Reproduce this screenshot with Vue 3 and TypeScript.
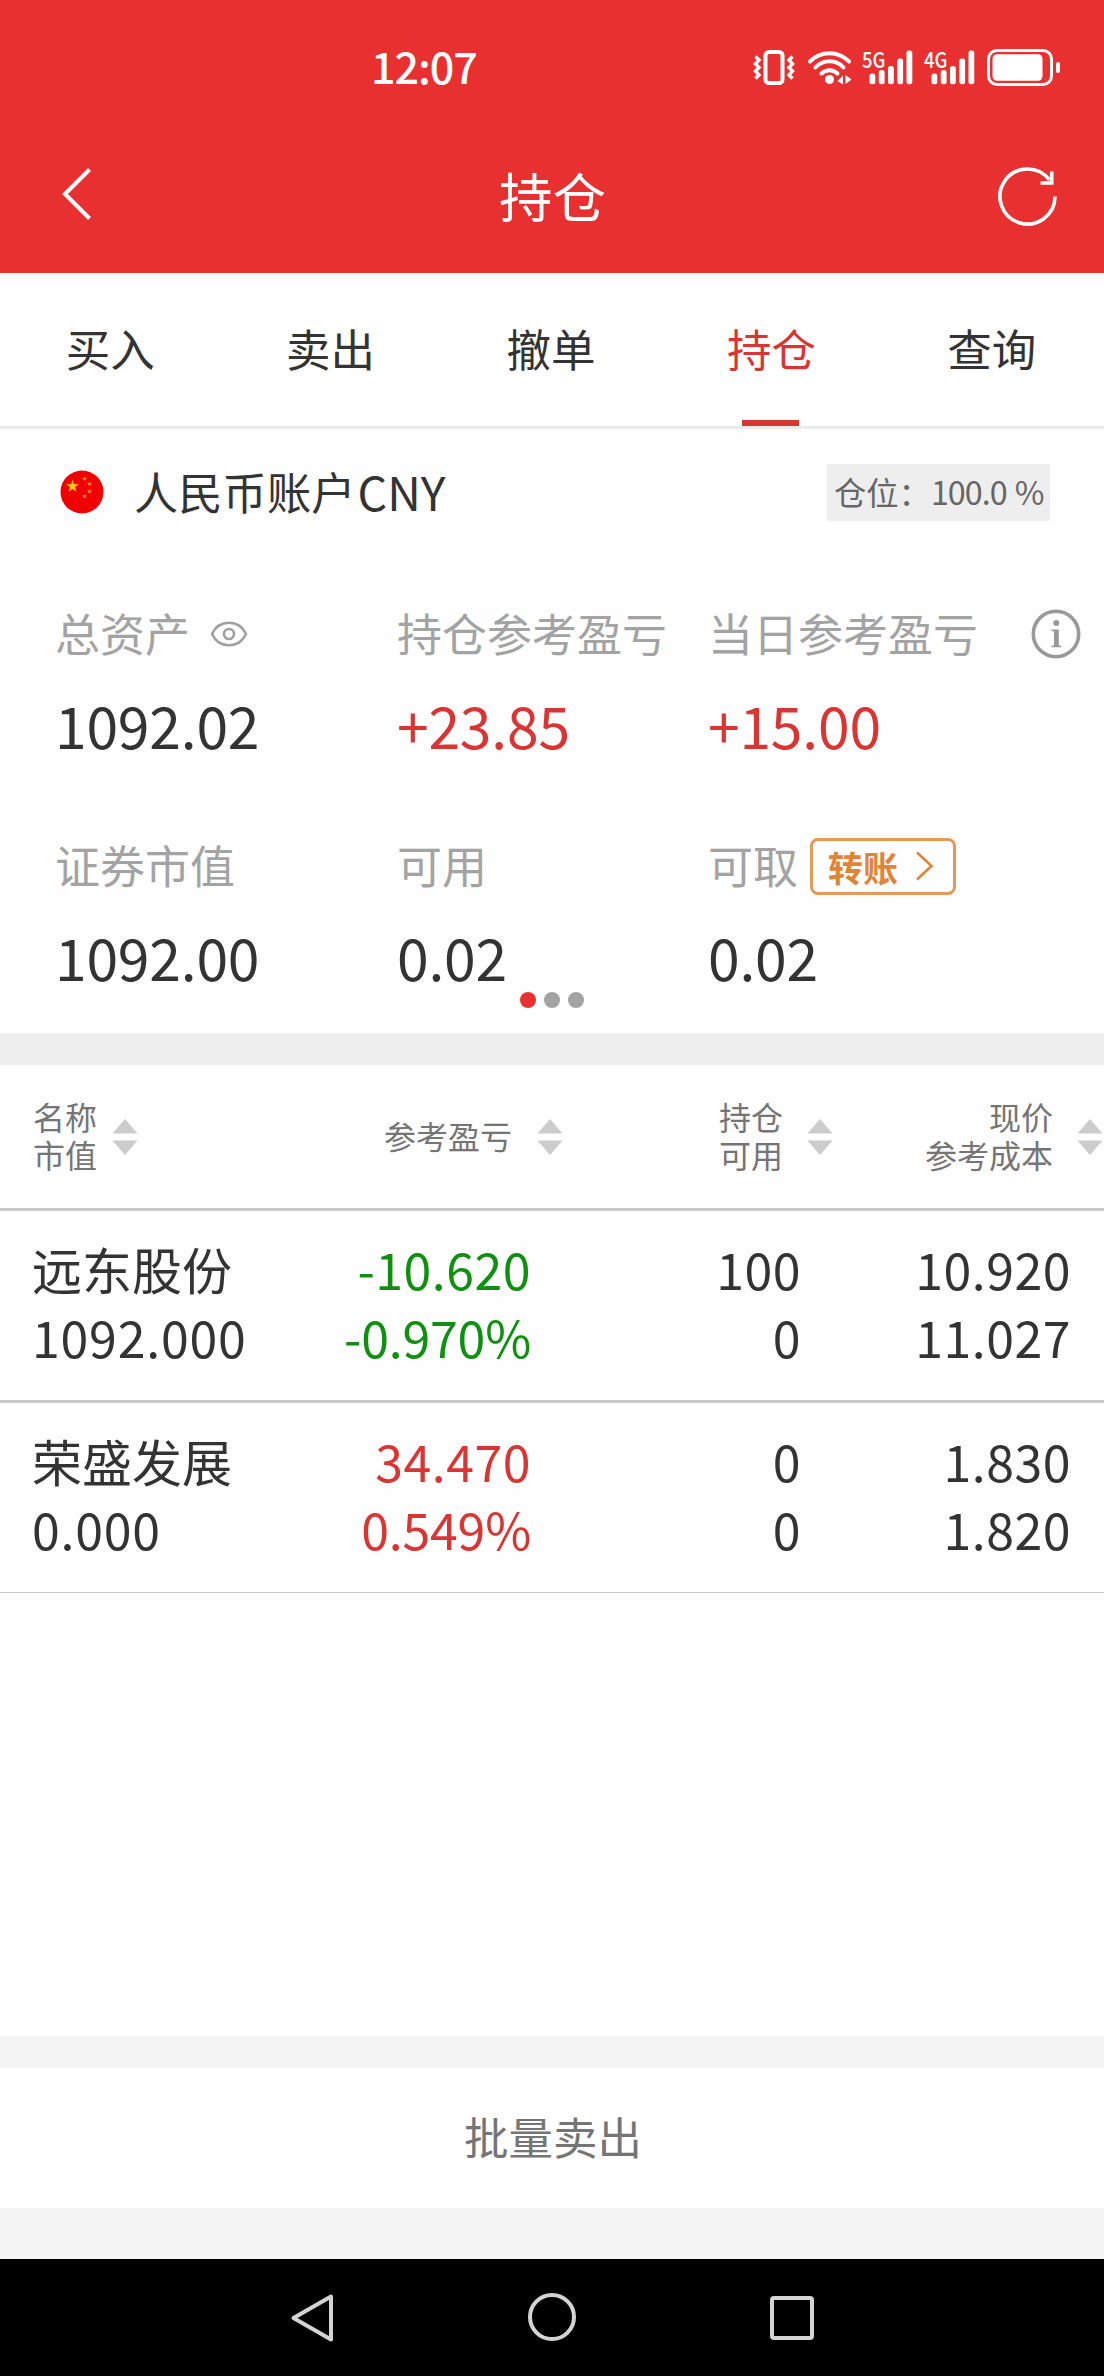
<script setup lang="ts">
interface Tab { label: string; active?: boolean }
interface Column { lines: string[]; cls: string }
interface Holding { name: string; value: string; profit: string; rate: string; held: string; usable: string; price: string; cost: string; trend: 'up' | 'down' }

const tabs: Tab[] = [
  { label: '买入' },
  { label: '卖出' },
  { label: '撤单' },
  { label: '持仓', active: true },
  { label: '查询' },
]

const columns: Column[] = [
  { lines: ['名称', '市值'], cls: 'h-name' },
  { lines: ['参考盈亏'], cls: 'h-profit' },
  { lines: ['持仓', '可用'], cls: 'h-held' },
  { lines: ['现价', '参考成本'], cls: 'h-price' },
]

const holdings: Holding[] = [
  { name: '远东股份', value: '1092.000', profit: '-10.620', rate: '-0.970%', held: '100', usable: '0', price: '10.920', cost: '11.027', trend: 'down' },
  { name: '荣盛发展', value: '0.000', profit: '34.470', rate: '0.549%', held: '0', usable: '0', price: '1.830', cost: '1.820', trend: 'up' },
]

const networks = ['5G', '4G']
const bars = [
  { x: 7.5, y: 26.5 },
  { x: 16.8, y: 23 },
  { x: 26, y: 19 },
  { x: 35.3, y: 11.5 },
  { x: 44.5, y: 3.5 },
]
</script>

<template>
  <div class="screen">
    <header class="top">
      <div class="status">
        <span class="clock">12:07</span>
        <div class="status-icons">
          <svg class="vibrate" width="44" height="40" viewBox="0 0 44 40" fill="none" stroke="#fff">
            <rect x="12.500" y="5" width="17" height="31" rx="3.500" stroke-width="4" />
            <path d="M2.500 9.500L6 13L2.500 17L6 20.500L2.500 24L6 28L2.500 31.500M39.500 9.500L36 13L39.500 17L36 20.500L39.500 24L36 28L39.500 31.500" stroke-width="3.400" />
          </svg>
          <svg class="wifi" width="46" height="40" viewBox="0 0 46 40" fill="none" stroke="#fff" stroke-width="4" stroke-linecap="round">
            <path d="M3 14.500A27 27 0 0 1 42 14.500M8.500 20.500A19 19 0 0 1 36.500 20.500M14.500 26.500A11.500 11.500 0 0 1 30.500 26.500" />
            <circle cx="22.500" cy="32.500" r="4.500" fill="#fff" stroke="none" />
            <path d="M36 28.500V37.500L30.500 34Z M38.500 37V28L44.500 32.500Z" fill="#fff" stroke="none" />
          </svg>
          <div v-for="n in networks" :key="n" class="signal">
            <svg width="54" height="40" viewBox="0 0 54 40" fill="#fff">
              <rect v-for="b in bars" :key="b.x" :x="b.x" :y="b.y" width="5.800" :height="37.300 - b.y" rx="2.500" />
            </svg>
            <span class="net">{{ n }}</span>
          </div>
          <svg class="battery" width="76" height="40" viewBox="0 0 76 40">
            <rect x="3.500" y="3.500" width="63" height="34" rx="8.500" fill="none" stroke="#fff" stroke-width="3" />
            <rect x="7.500" y="7.300" width="50" height="26.500" rx="4.500" fill="#fff" />
            <rect x="71" y="15" width="4" height="11" rx="2" fill="#fff" />
          </svg>
        </div>
      </div>
      <div class="titlebar">
        <svg width="34" height="56" viewBox="0 0 34 56" fill="none" stroke="#fff" stroke-width="4">
          <path d="M30.500 4.500L6 29L30.500 53.500" />
        </svg>
        <h1>持仓</h1>
        <svg width="64" height="64" viewBox="0 0 64 64" fill="none" stroke="#fff" stroke-width="3.600">
          <path d="M59 31.500A27.500 27.500 0 1 1 53.500 15" />
          <path d="M55.700 6.500V18H44.500" />
        </svg>
      </div>
    </header>

    <nav class="tabs">
      <div v-for="t in tabs" :key="t.label" class="tab" :class="{ active: t.active }">
        <span>{{ t.label }}</span>
      </div>
    </nav>

    <section class="account">
      <div class="account-head">
        <svg class="flag" width="44" height="44" viewBox="0 0 44 44">
          <circle cx="22" cy="22" r="21.500" fill="#f00000" />
          <path transform="translate(1 0)" d="M11.500 9.500L13 14.200H18L14 17.100L15.500 21.800L11.500 18.900L7.500 21.800L9 17.100L5 14.200H10Z" fill="#fc0" />
          <path id="small-star" d="M24.500 6.500L25.200 8H27L25.600 9L26 10.700L24.500 9.700L23 10.700L23.400 9L22 8H23.800Z" fill="#f0a800" />
          <use href="#small-star" x="5" y="5" />
          <use href="#small-star" x="5" y="12.500" />
          <use href="#small-star" x="0" y="17.500" />
        </svg>
        <span class="account-name">人民币账户<span class="currency">CNY</span></span>
        <span class="position">仓位：<span class="percent">100.0 %</span></span>
      </div>

      <div class="stats">
        <div class="stat">
          <div class="label">总资产
            <svg class="eye" width="38" height="28" viewBox="0 0 38 28" fill="none" stroke="#a0a0a0" stroke-width="2.600">
              <path d="M2 14C9 -1 29 -1 36 14C29 29 9 29 2 14Z" />
              <circle cx="19" cy="14" r="5" />
            </svg>
          </div>
          <div class="value">1092.02</div>
        </div>
        <div class="stat">
          <div class="label">持仓参考盈亏</div>
          <div class="value up">+23.85</div>
        </div>
        <div class="stat">
          <div class="label">当日参考盈亏
            <svg class="info" width="50" height="50" viewBox="0 0 50 50">
              <circle cx="25" cy="25" r="22.700" fill="none" stroke="#999" stroke-width="3.600" />
              <circle cx="25.300" cy="14" r="3" fill="#999" />
              <path d="M20.500 20.500H27.800V36.500H30V38.300H20.500V36.500H23V22.300H20.500Z" fill="#999" />
            </svg>
          </div>
          <div class="value up">+15.00</div>
        </div>
        <div class="stat">
          <div class="label">证券市值</div>
          <div class="value">1092.00</div>
        </div>
        <div class="stat">
          <div class="label">可用</div>
          <div class="value">0.02</div>
        </div>
        <div class="stat">
          <div class="label">可取
            <span class="transfer">转账
              <svg width="20" height="32" viewBox="0 0 20 32" fill="none" stroke="#e08437" stroke-width="2.600">
                <path d="M2 2.500L16.500 16L2 29.500" />
              </svg>
            </span>
          </div>
          <div class="value">0.02</div>
        </div>
      </div>

      <div class="dots"><i class="on"></i><i></i><i></i></div>
    </section>

    <div class="band"></div>

    <section class="table">
      <div class="thead">
        <div v-for="c in columns" :key="c.cls" class="th" :class="c.cls">
          <div class="th-text"><div v-for="l in c.lines" :key="l">{{ l }}</div></div>
          <svg width="26" height="36" viewBox="0 0 26 36" fill="#ccc">
            <path d="M13 0L25.500 14.500H0.500Z M13 36L25.500 21.500H0.500Z" />
          </svg>
        </div>
      </div>
      <div v-for="h in holdings" :key="h.name" class="row">
        <div class="cell c-name"><div class="name">{{ h.name }}</div><div>{{ h.value }}</div></div>
        <div class="cell c-profit" :class="h.trend"><div>{{ h.profit }}</div><div class="rate">{{ h.rate }}</div></div>
        <div class="cell c-held"><div>{{ h.held }}</div><div>{{ h.usable }}</div></div>
        <div class="cell c-price"><div>{{ h.price }}</div><div>{{ h.cost }}</div></div>
      </div>
    </section>

    <footer class="footer">
      <div class="batch">批量卖出</div>
    </footer>

    <div class="sysnav">
      <svg width="60" height="60" viewBox="0 0 60 60"><path d="M49 8.500V51.500L11.500 30Z" /></svg>
      <svg width="60" height="60" viewBox="0 0 60 60"><circle cx="30" cy="29" r="22" /></svg>
      <svg width="60" height="60" viewBox="0 0 60 60"><rect x="10" y="10" width="40" height="40" rx="2" /></svg>
    </div>
  </div>
</template>

<style>
body { margin: 0; background: #fff; }
</style>

<style scoped>
.screen {
  width: 1104px;
  height: 2376px;
  display: flex;
  flex-direction: column;
  background: #fefefe;
  color: #333;
  font-family: "Noto Sans CJK SC", sans-serif;
  overflow: hidden;
}
.screen svg { display: block; flex: none; }

.top { height: 273px; background: #e83030; color: #fff; }
.status { height: 120px; display: flex; align-items: flex-start; padding-left: 371px; }
.clock { width: 378px; margin-top: 33px; font-size: 43px; line-height: 64px; font-weight: 500; letter-spacing: -1px; }
.status-icons { display: flex; padding-top: 47px; }
.vibrate { margin-left: 4px; }
.wifi { margin-left: 10px; }
.signal { position: relative; width: 54px; margin-left: 8px; }
.wifi + .signal { margin-left: 9px; }
.net {
  position: absolute;
  left: 0;
  top: 0;
  font-size: 22px;
  line-height: 22px;
  font-weight: 500;
  transform: scaleX(0.84);
  transform-origin: left;
}
.battery { margin-left: 7px; }
.titlebar { height: 153px; display: flex; justify-content: space-between; align-items: flex-start; padding: 0 44px 0 59px; }
.titlebar > svg { margin-top: 45px; }
.titlebar h1 { margin: 35px 0 0 16px; font-size: 53.500px; line-height: 80px; font-weight: 400; }

.tabs { height: 156px; box-sizing: border-box; display: flex; padding-right: 2px; border-bottom: 3px solid #ebebeb; background: #fff; }
.tab { flex: 1; display: flex; flex-direction: column; align-items: center; justify-content: space-between; font-size: 44.500px; line-height: 66px; padding-top: 42px; box-sizing: border-box; }
.tab.active { color: #d93532; }
.tab.active::after { content: ""; width: 57px; height: 6px; margin-right: 2px; background: #d93532; }

.account { height: 604px; box-sizing: border-box; }
.account-head { height: 126px; display: flex; align-items: center; padding: 0 54px 0 60px; }
.account-name { display: flex; margin: -2px 0 0 30px; font-size: 44.300px; line-height: 66px; }
.currency { margin-left: 2px; font-size: 46.500px; }
.position { margin-left: auto; width: 223px; height: 57px; box-sizing: border-box; padding-left: 7px; background: #eee; color: #666; font-size: 32.300px; line-height: 55px; white-space: nowrap; }
.percent { letter-spacing: -1px; word-spacing: 2px; }
.stats { display: grid; grid-template-columns: 342px 311px 1fr; grid-template-rows: 232px 211px; padding-left: 55px; padding-top: 42px; box-sizing: border-box; height: 439px; }
.label { display: flex; align-items: center; height: 76px; font-size: 45px; line-height: 76px; color: #a3a3a3; white-space: nowrap; padding-bottom: 2px; margin-top: -2px; }
.label > svg, .label > .transfer { position: relative; top: 1px; }
.value { margin-top: 9px; font-size: 57px; line-height: 84px; letter-spacing: -0.200px; }
.value.up { color: #d93532; }
.eye { margin-left: 20px; }
.info { margin-left: 53px; }
.transfer { display: flex; align-items: center; box-sizing: border-box; margin-left: 12px; width: 146px; height: 57px; padding-left: 15px; border: 3px solid #e39a5b; border-radius: 8px; color: #e08437; font-size: 35px; font-weight: 700; line-height: 49px; }
.transfer svg { margin-left: 17px; }
.dots { height: 16px; margin-top: -2px; display: flex; justify-content: center; gap: 8px; }
.dots i { width: 16px; height: 16px; border-radius: 50%; background: #a3a3a3; }
.dots i.on { background: #e8302f; }

.band { height: 32px; background: #eee; }

.thead { display: flex; height: 146px; box-sizing: border-box; border-bottom: 3px solid #c8c8c8; color: #757575; font-size: 32px; line-height: 38px; }
.th { display: flex; align-items: center; height: 143px; justify-content: flex-end; box-sizing: border-box; text-align: right; }
.th-text { margin-bottom: 4px; }
.h-name { width: 138px; }
.h-name svg { margin-left: 15px; }
.h-profit { width: 425px; }
.h-profit svg { margin-left: 25px; }
.h-held { width: 270px; }
.h-held svg { margin-left: 24px; }
.h-price { width: 270px; }
.h-price svg { margin-left: 24px; }

.row { display: flex; height: 192px; box-sizing: border-box; border-bottom: 3px solid #c8c8c8; padding-top: 23px; font-size: 50px; letter-spacing: 0.500px; line-height: 68px; text-align: right; }
.row:last-child { height: 190px; border-bottom-width: 1px; }
.c-name { width: 300px; padding-left: 32px; box-sizing: border-box; text-align: left; letter-spacing: 0.800px; }
.c-name .name { letter-spacing: 0; }
.c-profit { width: 231px; }
.c-profit.up { color: #d93532; }
.c-profit.down { color: #0f900f; }
.rate { letter-spacing: -0.200px; }
.c-held { width: 270px; }
.c-price { width: 270px; }

.footer { margin-top: auto; height: 223px; box-sizing: border-box; padding: 32px 0 51px; background: #f4f4f4; }
.batch { height: 140px; padding-left: 2px; background: #fff; color: #757575; text-align: center; font-size: 44.500px; line-height: 136px; }
.sysnav { height: 117px; display: flex; justify-content: center; gap: 180px; background: #000; padding-top: 29px; box-sizing: border-box; }
.sysnav svg { fill: none; stroke: #d4d4d4; stroke-width: 4; stroke-linejoin: round; }
</style>
